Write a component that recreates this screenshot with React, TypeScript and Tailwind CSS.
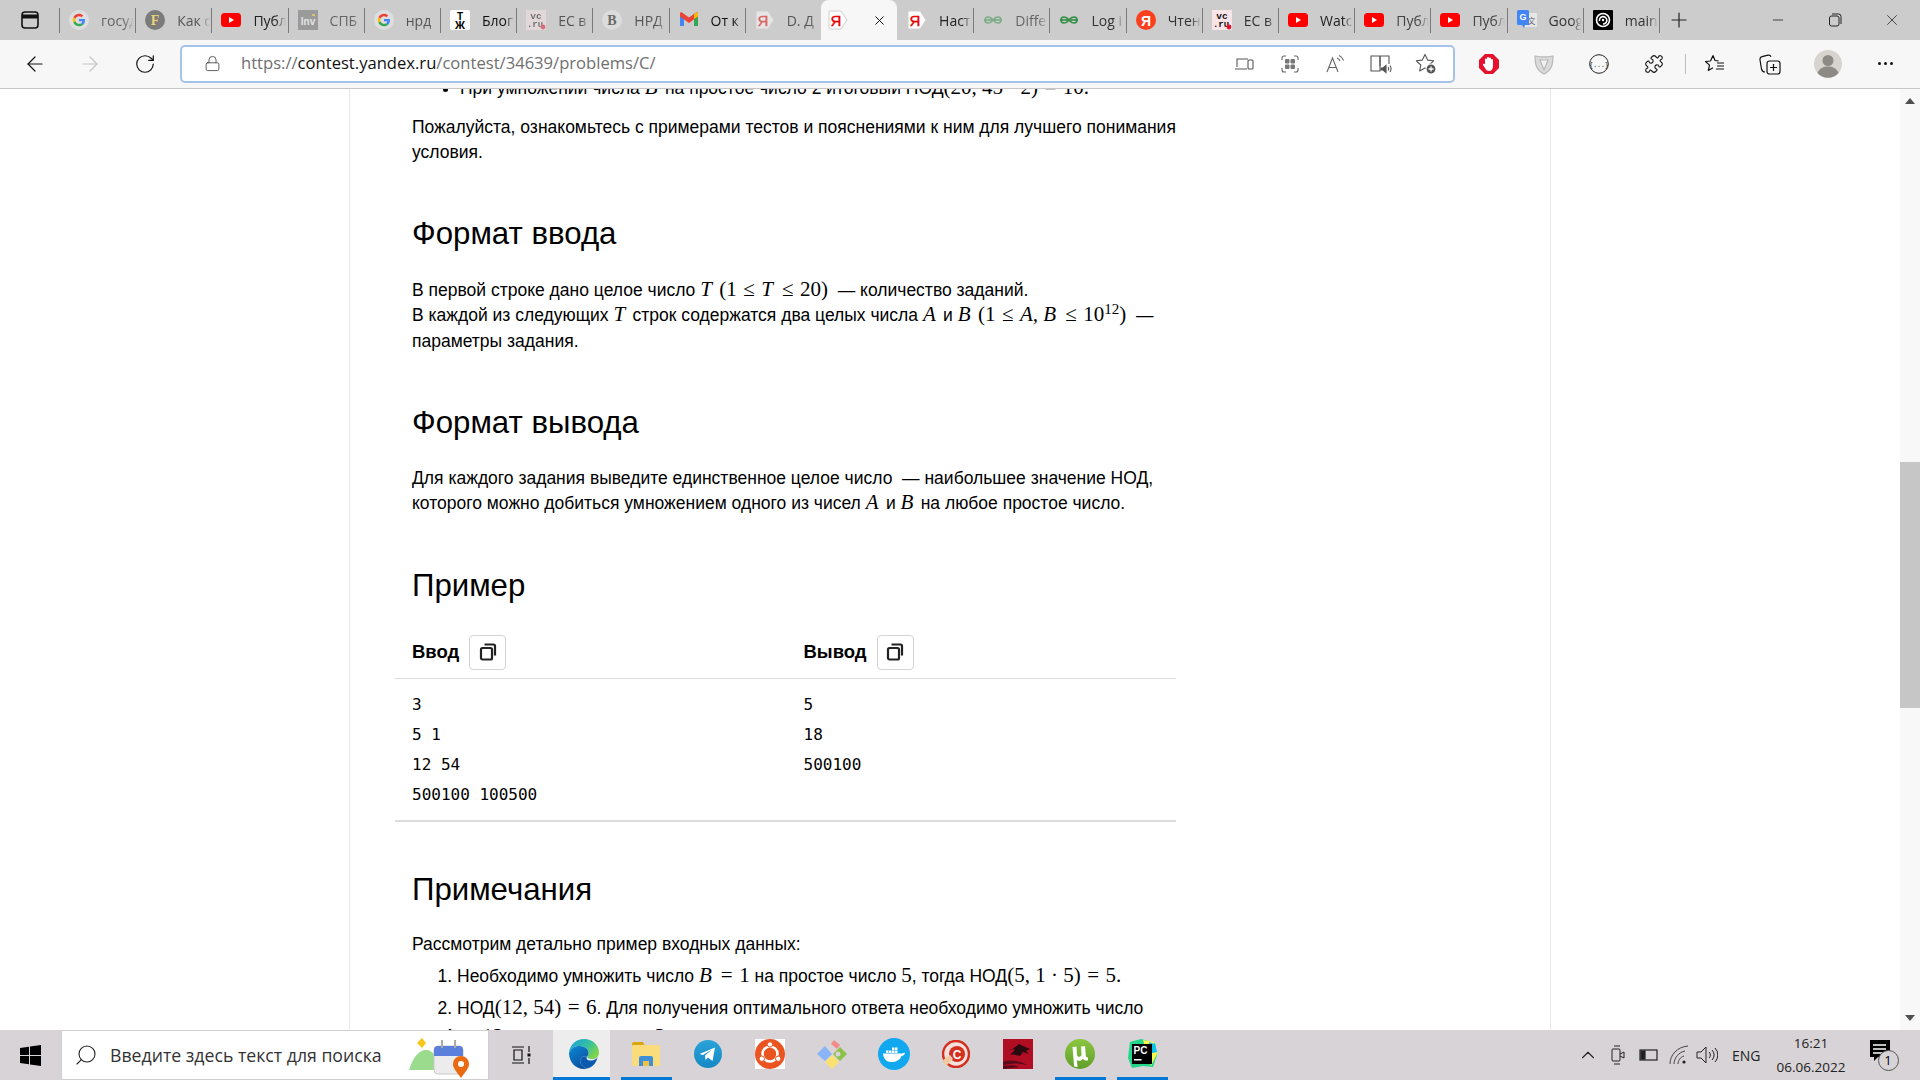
import { ReactNode } from "react";
import {
  ArrowLeft,
  ArrowRight,
  RotateCw,
  Lock,
  Plus,
  Minus,
  X,
  ChevronUp,
  Search,
  Puzzle,
} from "lucide-react";

const GoogleIcon = () => (
  <svg width="20" height="20" viewBox="0 0 64 64">
    <circle cx="32" cy="32" r="32" fill="#dedede" />
    <g transform="translate(12 12) scale(0.833)">
      <path fill="#EA4335" d="M24 9.5c3.54 0 6.71 1.22 9.21 3.6l6.85-6.85C35.9 2.38 30.47 0 24 0 14.62 0 6.51 5.38 2.56 13.22l7.98 6.19C12.43 13.72 17.74 9.5 24 9.5z" />
      <path fill="#4285F4" d="M46.98 24.55c0-1.57-.15-3.09-.38-4.55H24v9.02h12.94c-.58 2.96-2.26 5.48-4.78 7.18l7.73 6c4.51-4.18 7.09-10.36 7.09-17.65z" />
      <path fill="#FBBC05" d="M10.53 28.59c-.48-1.45-.76-2.99-.76-4.59s.27-3.14.76-4.59l-7.98-6.19C.92 16.46 0 20.12 0 24c0 3.88.92 7.54 2.56 10.78l7.97-6.19z" />
      <path fill="#34A853" d="M24 48c6.48 0 11.93-2.13 15.89-5.81l-7.73-6c-2.15 1.45-4.92 2.3-8.16 2.3-6.26 0-11.57-4.22-13.47-9.91l-7.98 6.19C6.51 42.62 14.62 48 24 48z" />
    </g>
  </svg>
);

const LetterCircle = ({ bg, fg, letter }: { bg: string; fg: string; letter: string }) => (
  <svg width="20" height="20" viewBox="0 0 20 20">
    <circle cx="10" cy="10" r="10" fill={bg} />
    <text x="10" y="15" textAnchor="middle" fontSize="14" fontWeight="700" fontFamily="Liberation Serif" fill={fg}>
      {letter}
    </text>
  </svg>
);

const YoutubeIcon = () => (
  <svg width="20" height="20" viewBox="0 0 20 20">
    <rect x="0" y="3" width="20" height="14" rx="3.5" fill="#ff0000" />
    <path d="M8 7l5 3-5 3z" fill="#fff" />
  </svg>
);

const InvIcon = () => (
  <svg width="20" height="20" viewBox="0 0 20 20">
    <rect width="20" height="20" fill="#9a9a9a" />
    <text x="10" y="15" textAnchor="middle" fontSize="10" fontWeight="700" fontFamily="Liberation Sans" fill="#e4e4e4">
      Inv
    </text>
    <path d="M14 4h3v2h-3z" fill="#d8c26a" />
  </svg>
);

const TjIcon = () => (
  <svg width="20" height="20" viewBox="0 0 20 20">
    <rect width="20" height="20" rx="2" fill="#fff" />
    <text x="10" y="9.5" textAnchor="middle" fontSize="10" fontWeight="700" fontFamily="Liberation Sans" fill="#000">
      Т
    </text>
    <text x="10" y="18.5" textAnchor="middle" fontSize="11" fontWeight="700" fontFamily="Liberation Sans" fill="#000">
      Ж
    </text>
  </svg>
);

const VcIcon = () => (
  <svg width="20" height="20" viewBox="0 0 20 20">
    <rect width="20" height="20" fill="#f9e4e8" />
    <text x="10" y="9" textAnchor="middle" fontSize="9.5" fontWeight="700" fontFamily="Liberation Mono" fill="#111">
      vc
    </text>
    <text x="9" y="17" textAnchor="middle" fontSize="9" fontWeight="700" fontFamily="Liberation Mono" fill="#111">
      .ru
    </text>
    <circle cx="17" cy="17" r="2.4" fill="#e8112d" />
  </svg>
);

const GmailIcon = () => (
  <svg width="20" height="20" viewBox="0 0 20 20">
    <path d="M1 5v11h4V9z" fill="#4285f4" />
    <path d="M15 9v7h4V5z" fill="#34a853" />
    <path d="M1 3.5v3l9 6.5 9-6.5v-3c0-1-1.2-1.6-2-1l-7 5-7-5c-.8-.6-2 0-2 1z" fill="#ea4335" />
    <path d="M15 4.5V9l4-2.5v-3c0-1-1.2-1.6-2-1z" fill="#fbbc04" />
  </svg>
);

const YandexTag = () => (
  <svg width="20" height="20" viewBox="0 0 20 20">
    <path d="M2 1h11l6 9-6 9H2a1 1 0 0 1-1-1V2a1 1 0 0 1 1-1z" fill="#fff" stroke="#cfcfcf" strokeWidth="1" />
    <text x="8" y="15.5" textAnchor="middle" fontSize="15" fontFamily="Liberation Sans" stroke="#e60000" strokeWidth="0.4" fill="#e60000">
      Я
    </text>
  </svg>
);

const GfgIcon = () => (
  <svg width="20" height="20" viewBox="0 0 20 20" fill="none" stroke="#2f8d46" strokeWidth="1.6">
    <path d="M10 10c-1.500 2-3 3-5 3a3 3 0 0 1 0-6c2 0 3.500 1 5 3zM10 10c1.500 2 3 3 5 3a3 3 0 0 0 0-6c-2 0-3.500 1-5 3z" />
    <path d="M1 10h18" />
  </svg>
);

const YandexCircle = () => (
  <svg width="20" height="20" viewBox="0 0 20 20">
    <circle cx="10" cy="10" r="10" fill="#fc3f1d" />
    <text x="10" y="15.5" textAnchor="middle" fontSize="14" fontWeight="700" fontFamily="Liberation Sans" fill="#fff">
      Я
    </text>
  </svg>
);

const TranslateIcon = () => (
  <svg width="20" height="20" viewBox="0 0 20 20">
    <rect x="8" y="3" width="12" height="14" fill="#e6e6e6" />
    <text x="14.5" y="14" textAnchor="middle" fontSize="8" fontFamily="Noto Sans CJK SC" fill="#666">
      文
    </text>
    <path d="M1.5 0h9a1.5 1.5 0 0 1 1.5 1.5V15H8l-1 3-2-3H1.5A1.5 1.5 0 0 1 0 13.5v-12A1.5 1.5 0 0 1 1.5 0z" fill="#4285f4" />
    <text x="6" y="10" textAnchor="middle" fontSize="9" fontWeight="700" fontFamily="Liberation Sans" fill="#fff">
      G
    </text>
  </svg>
);

const SwirlIcon = () => (
  <svg width="20" height="20" viewBox="0 0 20 20" fill="none">
    <rect width="20" height="20" rx="1" fill="#000" />
    <circle cx="10" cy="10" r="6.5" stroke="#fff" strokeWidth="1.6" />
    <path d="M6.5 11a3.7 3.7 0 1 1 3.5 3" stroke="#fff" strokeWidth="1.6" />
    <circle cx="10" cy="10" r="1.2" fill="#fff" />
  </svg>
);

type Tab = { icon: ReactNode; label: string; color?: string; dim?: boolean; active?: boolean };

const tabs: Tab[] = [
  { icon: <GoogleIcon />, label: "госуд", color: "text-[#666]" },
  { icon: <LetterCircle bg="#7b7b7b" fg="#e8d67a" letter="F" />, label: "Как с", color: "text-[#555]" },
  { icon: <YoutubeIcon />, label: "Публ", color: "text-[#222]" },
  { icon: <InvIcon />, label: "СПБ", color: "text-[#666]" },
  { icon: <GoogleIcon />, label: "нрд", color: "text-[#555]" },
  { icon: <TjIcon />, label: "Блог", color: "text-[#111]" },
  { icon: <VcIcon />, label: "ЕС в", color: "text-[#555]", dim: true },
  { icon: <LetterCircle bg="#dcdcdc" fg="#6a6a6a" letter="B" />, label: "НРД", color: "text-[#555]" },
  { icon: <GmailIcon />, label: "От к", color: "text-[#111]" },
  { icon: <YandexTag />, label: "D. Д", color: "text-[#555]", dim: true },
  { icon: <YandexTag />, label: "", active: true },
  { icon: <YandexTag />, label: "Наст", color: "text-[#222]" },
  { icon: <GfgIcon />, label: "Diffe", color: "text-[#666]", dim: true },
  { icon: <GfgIcon />, label: "Log i", color: "text-[#333]" },
  { icon: <YandexCircle />, label: "Чтен", color: "text-[#333]" },
  { icon: <VcIcon />, label: "ЕС в", color: "text-[#333]" },
  { icon: <YoutubeIcon />, label: "Watc", color: "text-[#222]" },
  { icon: <YoutubeIcon />, label: "Публ", color: "text-[#444]" },
  { icon: <YoutubeIcon />, label: "Публ", color: "text-[#444]" },
  { icon: <TranslateIcon />, label: "Goog", color: "text-[#333]" },
  { icon: <SwirlIcon />, label: "main", color: "text-[#333]" },
];

const TabBar = () => (
  <div className="flex h-10 items-center bg-[#cccccc] font-['Open_Sans',sans-serif] text-[14px]">
    <div className="flex w-[59px] items-center justify-center">
      <svg width="20" height="20" viewBox="0 0 20 20" fill="none" stroke="#111" strokeWidth="1.6">
        <rect x="2" y="2" width="16" height="16" rx="3" />
        <path d="M2 6.5h16" strokeWidth="4" />
      </svg>
    </div>
    {tabs.map((tab, i) => {
      if (tab.active) {
        return (
          <div key={i} className="flex h-10 w-[76.2px] items-center rounded-t-lg bg-[#f7f7f7] pl-[7px]">
            <div className="w-5">{tab.icon}</div>
            <X size={15} strokeWidth={1.5} className="ml-[24px] text-black" />
          </div>
        );
      }
      const hideSep = tabs[i - 1]?.active;
      return (
        <div key={i} className="flex h-10 w-[76.2px] items-center">
          <div className={`h-[25px] w-px ${hideSep ? "bg-transparent" : "bg-[#7a7a7a]"}`} />
          <div className={`ml-[9px] h-5 w-5 shrink-0 ${tab.dim ? "opacity-50" : ""}`}>{tab.icon}</div>
          <div
            className={`ml-[12px] w-[33px] overflow-hidden whitespace-nowrap [mask-image:linear-gradient(to_right,black_70%,transparent)] ${tab.color}`}
          >
            {tab.label}
          </div>
        </div>
      );
    })}
    <div className="h-[25px] w-px bg-[#7a7a7a]" />
    <div className="flex w-[44px] items-center justify-center pr-[6px]">
      <Plus size={24} strokeWidth={1.2} className="text-[#222]" />
    </div>
    <div className="ml-auto flex">
      <div className="flex w-[56px] items-center justify-center pr-[2px]">
        <Minus size={16} strokeWidth={1.2} className="text-[#222]" />
      </div>
      <div className="flex w-[56px] items-center justify-center">
        <svg width="14" height="14" viewBox="0 0 14 14" fill="none" stroke="#222" strokeWidth="1">
          <rect x="1.5" y="3" width="9.5" height="10" rx="2" />
          <path d="M4 1h6.5a2.5 2.5 0 0 1 2.5 2.5V11" />
        </svg>
      </div>
      <div className="flex w-[57px] items-center justify-center">
        <X size={18} strokeWidth={1} className="text-[#222]" />
      </div>
    </div>
  </div>
);

const ToolButton = ({ children, w = "w-[55px]" }: { children: ReactNode; w?: string }) => (
  <div className={`flex ${w} shrink-0 items-center justify-center`}>{children}</div>
);

const AddressBar = () => (
  <div className="flex h-[38px] w-[1275px] items-center rounded-[5px] border-2 border-[#a4c2ea] bg-white">
    <Lock size={17} strokeWidth={1.2} className="ml-[22px] text-[#444]" />
    <div className="ml-[20px] font-['Open_Sans',sans-serif] text-[16.6px] text-[#6f6f6f]">
      https://<span className="text-[#111]">contest.yandex.ru</span>/contest/34639/problems/C/
    </div>
    <div className="ml-auto flex pr-[4px] text-[#555]">
      <ToolButton w="w-[45.5px]">
        <svg width="20" height="20" viewBox="0 0 20 20" fill="none" stroke="#555" strokeWidth="1.1">
          <path d="M3 13V5h11M1 15h12" />
          <rect x="14" y="6" width="5" height="9" rx="1" />
        </svg>
      </ToolButton>
      <ToolButton w="w-[45.5px]">
        <svg width="20" height="20" viewBox="0 0 20 20" fill="none" stroke="#666" strokeWidth="1.1">
          <path d="M2 6V4a2 2 0 0 1 2-2h2M14 2h2a2 2 0 0 1 2 2v2M18 14v2a2 2 0 0 1-2 2h-2M6 18H4a2 2 0 0 1-2-2v-2" />
          <rect x="5" y="5" width="4.500" height="4.500" rx="1" fill="#777" stroke="none" />
          <rect x="10.500" y="5" width="4.500" height="4.500" rx="1" fill="#777" stroke="none" />
          <rect x="5" y="10.500" width="4.500" height="4.500" rx="1" fill="#777" stroke="none" />
          <rect x="10.500" y="10.500" width="4.500" height="4.500" rx="1" fill="#777" stroke="none" />
        </svg>
      </ToolButton>
      <ToolButton w="w-[45.5px]">
        <svg width="20" height="20" viewBox="0 0 20 20" fill="none" stroke="#666" strokeWidth="1.1">
          <path d="M2 18L7.5 4 13 18M4 13.5h7" />
          <path d="M12 4a5 5 0 0 1 3 3M14 1.5a8 8 0 0 1 4.5 5" />
        </svg>
      </ToolButton>
      <ToolButton w="w-[45.5px]">
        <svg width="22" height="20" viewBox="0 0 22 20" fill="none" stroke="#555" strokeWidth="1.1">
          <path d="M10 17H1V2h9zM10 2h9v8" />
          <path d="M10 2v10" />
          <path d="M11 14h2l3-2.5v7L13 16h-2z" fill="#555" />
          <path d="M18 13a3 3 0 0 1 0 3.5M20 11.5a6 6 0 0 1 0 6.5" />
        </svg>
      </ToolButton>
      <ToolButton w="w-[45.5px]">
        <svg width="22" height="22" viewBox="0 0 22 22" fill="none" stroke="#555" strokeWidth="1.1">
          <path d="M10 1.500l2.600 5.600 6 .7-4.400 4.200 1.100 6-5.300-3-5.300 3 1.100-6L1.300 7.800l6-.7z" strokeLinejoin="round" />
          <circle cx="16" cy="16" r="5" fill="#555" stroke="#fff" />
          <path d="M16 13.500v5M13.500 16h5" stroke="#fff" strokeWidth="1.300" />
        </svg>
      </ToolButton>
    </div>
  </div>
);

const Toolbar = () => (
  <div className="flex h-[49px] items-center border-b border-[#c6c6c6] bg-[#f7f7f7] pb-px pl-[7.5px]">
    <ToolButton>
      <ArrowLeft size={24} strokeWidth={1.2} className="text-[#111]" />
    </ToolButton>
    <ToolButton>
      <ArrowRight size={24} strokeWidth={1.2} className="text-[#c4c4c4]" />
    </ToolButton>
    <ToolButton>
      <RotateCw size={22} strokeWidth={1.3} className="text-[#111]" />
    </ToolButton>
    <div className="ml-[7.5px]">
      <AddressBar />
    </div>
    <div className="ml-[6.5px] flex items-center">
      <ToolButton>
        <svg width="22" height="22" viewBox="0 0 22 22">
          <path d="M7 1h8l6 6v8l-6 6H7l-6-6V7z" fill="#e8112d" />
          <path d="M7 11V6.500a1 1 0 0 1 2 0V5a1 1 0 0 1 2 0v.500a1 1 0 0 1 2 0V7a1 1 0 0 1 2 0v6c0 3-1.500 5-4 5-2 0-3-1-4-3l-2-3c-.500-1 .800-1.800 1.500-1z" fill="#fff" />
        </svg>
      </ToolButton>
      <ToolButton>
        <svg width="20" height="22" viewBox="0 0 20 22" fill="#dadada" stroke="#b9b9b9" strokeWidth="1.2">
          <path d="M1 3c5 1 13 1 18 0 0 8-1 14-9 18C2 17 1 11 1 3z" />
          <path d="M6 7h8l-4 10z" fill="#f2f2f2" />
        </svg>
      </ToolButton>
      <ToolButton>
        <svg width="20" height="20" viewBox="0 0 20 20" fill="none">
          <circle cx="10" cy="10" r="9.300" stroke="#222" strokeWidth="1" />
          <text x="10" y="12.500" textAnchor="middle" fontSize="6.500" fontFamily="Liberation Mono" fill="#222">
            {"{...}"}
          </text>
        </svg>
      </ToolButton>
      <ToolButton>
        <Puzzle size={20} strokeWidth={1.3} className="text-[#111]" />
      </ToolButton>
      <div className="ml-[3px] mr-[2px] h-5 w-px bg-[#bdbdbd]" />
      <ToolButton>
        <svg width="22" height="22" viewBox="0 0 22 22" fill="none" stroke="#111" strokeWidth="1.2">
          <path d="M9 2.500l2 5 3.500.3M6.500 8l-5 .5 4 3.600-1.200 5.400 4.700-2.800M9 2.500L6.500 8" strokeLinejoin="round" />
          <path d="M13 10h7M13 13h7M12 16h8" />
        </svg>
      </ToolButton>
      <ToolButton>
        <svg width="22" height="22" viewBox="0 0 22 22" fill="none" stroke="#111" strokeWidth="1.2">
          <path d="M6 19c-2 0-3-1-3.500-3L1 7c-.300-2 .500-3 2-3.300l6-1.500c1.500-.300 2.500.300 3 1.500" />
          <rect x="8" y="8" width="13" height="13" rx="2.500" />
          <path d="M14.500 11v7M11 14.500h7" />
        </svg>
      </ToolButton>
      <div className="flex w-[55px] items-center justify-center pl-[5px]">
        <svg width="28" height="28" viewBox="0 0 28 28">
          <circle cx="14" cy="14" r="14" fill="#d7d4cf" />
          <circle cx="14" cy="10.500" r="5.500" fill="#8d8a85" />
          <path d="M3.500 23c2-5 6-6.500 10.500-6.500s8.500 1.500 10.500 6.500a14 14 0 0 1-21 0z" fill="#8d8a85" />
        </svg>
      </div>
      <div className="flex w-[55px] items-center justify-center gap-[3px] pl-[10px]">
        <span className="h-[3px] w-[3px] rounded-full bg-[#111]" />
        <span className="h-[3px] w-[3px] rounded-full bg-[#111]" />
        <span className="h-[3px] w-[3px] rounded-full bg-[#111]" />
      </div>
    </div>
  </div>
);

const I = ({ children }: { children: ReactNode }) => (
  <i className="pr-[2.5px] font-['Liberation_Serif',serif] text-[21px] leading-none">{children}</i>
);
const N = ({ children }: { children: ReactNode }) => (
  <span className="font-['Liberation_Serif',serif] text-[21px] leading-none">{children}</span>
);
const R = ({ children }: { children: ReactNode }) => (
  <span className="mx-[6.5px] font-['Liberation_Serif',serif] text-[21px] leading-none">{children}</span>
);

const Heading = ({ children, className }: { children: ReactNode; className: string }) => (
  <h2 className={`text-[31.2px] leading-[36px] font-normal text-black ${className}`}>{children}</h2>
);

const CopyButton = () => (
  <div className="ml-[10px] flex h-[35px] w-[37px] items-center justify-center rounded-[4px] border border-[#d4d4d4] bg-white">
    <svg width="18" height="18" viewBox="0 0 18 18" fill="none" stroke="#222" strokeWidth="2.200">
      <rect x="2" y="5" width="11" height="11.500" rx="1.500" />
      <path d="M5.500 1.500h9a1.500 1.500 0 0 1 1.500 1.500v9.500" />
    </svg>
  </div>
);

const SampleTable = () => (
  <div className="mt-[31px] ml-[-17px] w-[781px]">
    <div className="grid grid-cols-[408.5px_1fr] border-b border-[#dcdcdc] pb-2 text-[18.5px] font-bold text-black">
      <div className="flex items-center pl-[17px]">
        Ввод
        <CopyButton />
      </div>
      <div className="flex items-center">
        Вывод
        <CopyButton />
      </div>
    </div>
    <div className="grid grid-cols-[408.5px_1fr] border-b-2 border-[#dcdcdc] pt-[11px] pb-[10px] text-[16px] leading-[30px] text-black">
      <pre className="pl-[17px] font-['DejaVu_Sans_Mono',monospace]">{"3\n5 1\n12 54\n500100 100500"}</pre>
      <pre className="font-['DejaVu_Sans_Mono',monospace]">{"5\n18\n500100"}</pre>
    </div>
  </div>
);

const Article = () => (
  <article className="h-full w-[1202px] overflow-hidden border-x border-[#e8e8e8] bg-white pl-[62px]">
    <div className="mt-[-13px] w-[830px] whitespace-nowrap text-[17.5px] leading-[25.6px] text-black">
      <ul className="list-disc pl-[48px]">
        <li>
          При умножении числа <I>B</I> на простое число 2 итоговый НОД<N>(20, 45 · 2)</N>
          <R>=</R>
          <N>10.</N>
        </li>
      </ul>
      <p className="mt-[13px]">
        Пожалуйста, ознакомьтесь с примерами тестов и пояснениями к ним для лучшего понимания
        <br />
        условия.
      </p>
      <Heading className="mt-[50px]">Формат ввода</Heading>
      <p className="mt-[26px]">
        В первой строке дано целое число <I>T</I> <N>(1</N>
        <R>≤</R>
        <I>T</I>
        <R>≤</R>
        <N>20)</N> &nbsp;— количество заданий.
        <br />
        В каждой из следующих <I>T</I> строк содержатся два целых числа <I>A</I> и <I>B</I> <N>(1</N>
        <R>≤</R>
        <I>A, B</I>
        <R>≤</R>
        <N>
          10<sup className="text-[15px]">12</sup>)
        </N>{" "}
        &nbsp;—
        <br />
        параметры задания.
      </p>
      <Heading className="mt-[50px]">Формат вывода</Heading>
      <p className="mt-[25px]">
        Для каждого задания выведите единственное целое число &nbsp;— наибольшее значение НОД,
        <br />
        которого можно добиться умножением одного из чисел <I>A</I> и <I>B</I> на любое простое число.
      </p>
      <Heading className="mt-[51px]">Пример</Heading>
      <SampleTable />
      <Heading className="mt-[50px]">Примечания</Heading>
      <p className="mt-[24px]">Рассмотрим детально пример входных данных:</p>
      <ol className="mt-[4px] list-decimal pl-[45px] leading-[31.5px]">
        <li>
          Необходимо умножить число <I>B</I>
          <R>=</R>
          <N>1</N> на простое число <N>5</N>, тогда НОД<N>(5, 1 · 5)</N>
          <R>=</R>
          <N>5.</N>
        </li>
        <li>
          НОД<N>(12, 54)</N>
          <R>=</R>
          <N>6</N>. Для получения оптимального ответа необходимо умножить число
          <span className="mt-[-2px] ml-[-15px] block">
            <I>A</I>
            <R>=</R>
            <N>12</N> на простое число <N>3</N>
          </span>
        </li>
      </ol>
    </div>
  </article>
);

const Scrollbar = () => (
  <aside className="flex h-full w-5 flex-col items-center bg-[#f8f8f8]">
    <div className="mt-[9px] h-0 w-0 border-x-[5px] border-b-[6px] border-x-transparent border-b-[#505050]" />
    <div className="mt-[358px] h-[246px] w-full bg-[#c6c6c6]" />
    <div className="mt-auto mb-[9px] h-0 w-0 border-x-[5px] border-t-[6px] border-x-transparent border-t-[#505050]" />
  </aside>
);

const WinLogo = () => (
  <svg width="21" height="21" viewBox="0 0 21 21" fill="#000">
    <path d="M0 3l9-1.300V10H0zM10 1.500L21 0v10H10zM0 11h9v8.300L0 18zM10 11h11v10l-11-1.500z" />
  </svg>
);

const EdgeIcon = () => (
  <svg width="30" height="30" viewBox="0 0 30 30">
    <defs>
      <linearGradient id="edgeTop" x1="0" y1="0" x2="1" y2="0.6">
        <stop offset="0" stopColor="#1b9de2" />
        <stop offset="0.6" stopColor="#35c1a0" />
        <stop offset="1" stopColor="#7fd44a" />
      </linearGradient>
      <linearGradient id="edgeBody" x1="0" y1="0" x2="0.6" y2="1">
        <stop offset="0" stopColor="#0c8ad6" />
        <stop offset="1" stopColor="#0b4f9e" />
      </linearGradient>
    </defs>
    <path d="M15 0c8.500 0 15 6 15 13.500 0 4-3 6.500-7 6.500-3 0-5-1-5-2.500 1-1 1.500-2 1.500-3.500 0-4-4-7-9-7C6 7 1.500 9.500 0 14 .5 6 7 0 15 0z" fill="url(#edgeTop)" />
    <path d="M0 14c1.500-4.500 6-7 10.500-7 5 0 9 3 9 7 0 1.500-.5 2.500-1.500 3.500-1-.5-5-1-6.500 2.500C10 24 13 28 18 29.500 16.500 30 15.500 30 15 30 6.500 30 0 23 0 14z" fill="url(#edgeBody)" />
    <path d="M18 29.500c-5-1.500-8-5.500-6.500-9.500 1.500-3.500 5.500-3 6.500-2.500 0 1.500 2 2.500 5 2.500 2 0 4-.7 5.500-1.500C27 25 23 28.500 18 29.500z" fill="#0a5bb0" />
    <path d="M18 17.500c0 1.500 2 2.500 5 2.500 2 0 4-.7 5.500-1.500-1 1-3 3-7 3-2.500 0-5-1.500-3.500-4z" fill="#eef2f2" />
  </svg>
);

const ExplorerIcon = () => (
  <svg width="28" height="24" viewBox="0 0 28 24">
    <path d="M0 2a2 2 0 0 1 2-2h9l2 4H0z" fill="#dca60e" />
    <rect y="3" width="28" height="21" rx="1" fill="#fbdc7c" />
    <path d="M7 24v-8a2 2 0 0 1 2-2h10a2 2 0 0 1 2 2v8h-4v-5h-6v5z" fill="#3f8ed8" />
    <rect x="11" y="19" width="6" height="5" fill="#f3c23e" />
  </svg>
);

const TelegramIcon = () => (
  <svg width="28" height="28" viewBox="0 0 28 28">
    <defs>
      <linearGradient id="tg" x1="0" y1="0" x2="0" y2="1">
        <stop offset="0" stopColor="#2aa3d9" />
        <stop offset="1" stopColor="#1688c4" />
      </linearGradient>
    </defs>
    <circle cx="14" cy="14" r="14" fill="url(#tg)" />
    <path d="M5.500 14L21 7.500 18.500 21l-4.500-3.500-2.500 2.500-.5-4.500 7-6-9 5.500z" fill="#fff" />
  </svg>
);

const UbuntuIcon = () => (
  <svg width="30" height="30" viewBox="0 0 30 30">
    <rect width="30" height="30" fill="#fff" />
    <circle cx="15" cy="15" r="15" fill="#e95420" />
    <circle cx="15" cy="15" r="7.500" fill="none" stroke="#fff" strokeWidth="2.600" />
    <circle cx="15" cy="5.500" r="2.700" fill="#fff" stroke="#e95420" />
    <circle cx="6.800" cy="19.700" r="2.700" fill="#fff" stroke="#e95420" />
    <circle cx="23.200" cy="19.700" r="2.700" fill="#fff" stroke="#e95420" />
  </svg>
);

const DiamondIcon = () => (
  <svg width="30" height="30" viewBox="0 0 30 30">
    <path d="M14 5l3-4 6 5-3 4z" fill="#f48a8a" />
    <path d="M0 15l8-8 7 8-7 7z" fill="#8ab4f8" />
    <path d="M16 15l7-7 7 7-7 7z" fill="#8bc34a" />
    <path d="M8 23l7-7 7 7-7 7z" fill="#fde272" />
    <circle cx="21" cy="15" r="2.500" fill="#d7d3d6" />
  </svg>
);

const DockerIcon = () => (
  <svg width="32" height="32" viewBox="0 0 32 32">
    <circle cx="16" cy="16" r="16" fill="#11a8f0" />
    <path d="M5 15.500h19c1 0 2-1 3-.5-.5 2-2 3-3.500 3C22 22 18 24 13 24c-4.500 0-7.500-3-8-8.500z" fill="#fff" />
    <rect x="8" y="12.500" width="2.500" height="2.500" fill="#fff" />
    <rect x="11" y="12.500" width="2.500" height="2.500" fill="#fff" />
    <rect x="14" y="12.500" width="2.500" height="2.500" fill="#fff" />
    <rect x="17" y="12.500" width="2.500" height="2.500" fill="#fff" />
    <rect x="14" y="9.500" width="2.500" height="2.500" fill="#fff" />
    <rect x="17" y="9.500" width="2.500" height="2.500" fill="#fff" />
  </svg>
);

const CCleanerIcon = () => (
  <svg width="28" height="28" viewBox="0 0 28 28">
    <circle cx="14" cy="14" r="13" fill="#f4e0dc" stroke="#d3301f" strokeWidth="2.500" />
    <circle cx="15" cy="14" r="8" fill="#d3301f" />
    <text x="15" y="18.500" textAnchor="middle" fontSize="12" fontWeight="700" fontFamily="Liberation Sans" fill="#fff">
      C
    </text>
    <path d="M1 20l7-5 3 4-6 6c-2 0-4-2-4-5z" fill="#f3c9a0" />
  </svg>
);

const KaliIcon = () => (
  <svg width="30" height="30" viewBox="0 0 30 30">
    <rect width="30" height="30" fill="#b10d23" />
    <path d="M1 8l7 3 8-6 4 2 7 3-4 2 3 3-6-2-3 4c-4-1-7-2-10-1 3-3 4-4 5-6-4 1-7 0-11-2z" fill="#2a0a10" />
    <path d="M0 23c8-3 18-1 24 3-8-2-16-2-24 0zM0 27c5-1 12-1 16 1l-16 2z" fill="#5a0a18" />
  </svg>
);

const TorrentIcon = () => (
  <svg width="30" height="30" viewBox="0 0 30 30">
    <defs>
      <linearGradient id="ut" x1="0" y1="0" x2="0" y2="1">
        <stop offset="0" stopColor="#8cc63f" />
        <stop offset="1" stopColor="#5f9e2a" />
      </linearGradient>
    </defs>
    <circle cx="15" cy="15" r="15" fill="url(#ut)" />
    <path d="M7.500 8l4-.5.5 8c.2 3 3.500 3 4.500.5l-.5-8.500 4-.5.8 9c.2 2 .7 2.500 2.200 2.500v3c-2.500.3-4.300-.2-5-2-1.500 2.500-4.500 3-6.200 1.500l.8 7-3.500-.5z" fill="#fff" />
  </svg>
);

const PycharmIcon = () => (
  <svg width="30" height="30" viewBox="0 0 30 30">
    <path d="M3 3l11-3 14 4 2 12-4 12-10-1-11 2-4-10z" fill="#21d789" />
    <path d="M16 1l11 2 3 12-6 12z" fill="#fcf84a" />
    <path d="M22 3l6 2 2 8-5 1z" fill="#07c3f2" />
    <rect x="5" y="5" width="20" height="20" fill="#000" />
    <text x="6.500" y="15" fontSize="10" fontWeight="700" fontFamily="Liberation Sans" fill="#fff">
      PC
    </text>
    <rect x="7" y="20" width="7.500" height="1.500" fill="#fff" />
  </svg>
);

const dockApps: { icon: ReactNode; underline?: boolean; active?: boolean }[] = [
  { icon: <EdgeIcon />, active: true },
  { icon: <ExplorerIcon />, underline: true },
  { icon: <TelegramIcon /> },
  { icon: <UbuntuIcon /> },
  { icon: <DiamondIcon /> },
  { icon: <DockerIcon /> },
  { icon: <CCleanerIcon /> },
  { icon: <KaliIcon /> },
  { icon: <TorrentIcon />, underline: true },
  { icon: <PycharmIcon />, underline: true },
];

const Tray = () => (
  <div className="ml-auto flex h-full items-center font-['Open_Sans',sans-serif] text-[#222]">
    <ChevronUp size={22} strokeWidth={1.2} />
    <svg className="ml-[11px]" width="16" height="22" viewBox="0 0 16 22" fill="none" stroke="#222" strokeWidth="1">
      <path d="M4 2h6M4 20h6" />
      <rect x="2" y="5" width="8" height="12" rx="1" />
      <path d="M10 10l4-2v6l-4-2" />
    </svg>
    <svg className="ml-[13px]" width="20" height="12" viewBox="0 0 20 12" fill="none" stroke="#222" strokeWidth="1.2">
      <rect x="1" y="1" width="17" height="10" />
      <rect x="2" y="2" width="4" height="8" fill="#222" />
    </svg>
    <svg className="ml-[10px]" width="20" height="20" viewBox="0 0 20 20" fill="none" stroke="#444" strokeWidth="1">
      <path d="M1 19C1 10 8 2 19 1M5 19c0-6 5-12 11-13M9 19c0-3 2-7 6-8" />
      <circle cx="15" cy="17" r="1.600" fill="#222" stroke="none" />
    </svg>
    <svg className="ml-[7px]" width="22" height="20" viewBox="0 0 22 20" fill="none" stroke="#222" strokeWidth="1">
      <path d="M1 7h4l5-5v16l-5-5H1z" />
      <path d="M13 7a4 4 0 0 1 0 6M16 5a7 7 0 0 1 0 10M19 3a10 10 0 0 1 0 14" />
    </svg>
    <div className="ml-[14px] w-[32px] text-[14px]">ENG</div>
    <div className="ml-[11px] flex w-[72px] flex-col items-center text-[13.5px] leading-[24px] font-normal">
      <div>16:21</div>
      <div>06.06.2022</div>
    </div>
    <div className="relative mr-[26.5px] ml-[22.5px] h-[30px] w-[24px]">
      <svg width="20" height="22" viewBox="0 0 20 22" className="absolute left-0 top-0">
        <path d="M0 0h20v17H8l-4 4v-4H0z" fill="#000" />
        <path d="M3 5h13M3 9h13M3 13h13" stroke="#fff" strokeWidth="1.400" />
      </svg>
      <div className="absolute left-[8px] top-[10px] flex h-[21px] w-[21px] items-center justify-center rounded-full border border-[#555] bg-[#d7d3d6] text-[13px] text-black">
        1
      </div>
    </div>
  </div>
);

const Taskbar = () => (
  <div className="relative flex h-[50px] shrink-0 items-stretch bg-[#d7d3d6]">
    <div className="flex w-[61px] items-center justify-center">
      <WinLogo />
    </div>
    <div className="flex w-[428px] items-center border border-[#cfcfcf] bg-white pl-[12px]">
      <Search size={24} strokeWidth={1.1} className="-scale-x-100 text-[#222]" />
      <div className="ml-[12px] font-['Open_Sans',sans-serif] text-[17.7px] text-[#333]">Введите здесь текст для поиска</div>
      <svg className="ml-auto mr-[19px]" width="62" height="46" viewBox="0 0 62 46">
        <path d="M2 8l5-5 4 5-4 5z" transform="translate(8 3)" fill="#f5c518" />
        <path d="M2 38c4-13 10-20 17-20 7 0 11 6 13 20z" fill="#9bdb8e" />
        <rect x="27" y="14" width="29" height="28" rx="4" fill="#ececec" stroke="#c9c9c9" />
        <path d="M27 18a4 4 0 0 1 4-4h21a4 4 0 0 1 4 4v6H27z" fill="#5b7fdc" />
        <path d="M35 8v8M48 8v8" stroke="#aaa" strokeWidth="2" />
        <path d="M54 46c-5-7-8-10-8-14a8 8 0 0 1 16 0c0 4-3 7-8 14z" fill="#ea6a12" />
        <circle cx="54" cy="32" r="3" fill="#fff" />
      </svg>
    </div>
    <div className="flex w-[64px] items-center justify-center">
      <svg width="20" height="20" viewBox="0 0 20 20" fill="none" stroke="#111" strokeWidth="1.2">
        <path d="M1 2h12M1 18h12M3 5h8v10H3zM18 1v6M18 13v6" />
        <rect x="16.500" y="8.500" width="3" height="3" fill="#111" stroke="none" />
      </svg>
    </div>
    {dockApps.map((app, i) => (
      <div key={i} className="flex h-full w-[62px] flex-col items-center">
        <div
          className={`flex w-full flex-1 items-center justify-center ${
            app.active ? "bg-[linear-gradient(to_right,#ededed_57px,transparent_57px)]" : ""
          }`}
        >
          {app.icon}
        </div>
        {app.active && <div className="h-[3px] w-[57px] self-start bg-[#0078d7]" />}
        {app.underline && <div className="h-[3px] w-[51px] bg-[#0078d7]" />}
        {!app.active && !app.underline && <div className="h-[3px]" />}
      </div>
    ))}
    <Tray />
  </div>
);

export default function App() {
  return (
    <div className="flex h-screen flex-col overflow-hidden bg-white font-['Liberation_Sans',sans-serif]">
      <TabBar />
      <Toolbar />
      <main className="flex min-h-0 flex-1">
        <div className="w-[349px] shrink-0 bg-white" />
        <Article />
        <div className="flex-1 bg-white" />
        <Scrollbar />
      </main>
      <Taskbar />
    </div>
  );
}
